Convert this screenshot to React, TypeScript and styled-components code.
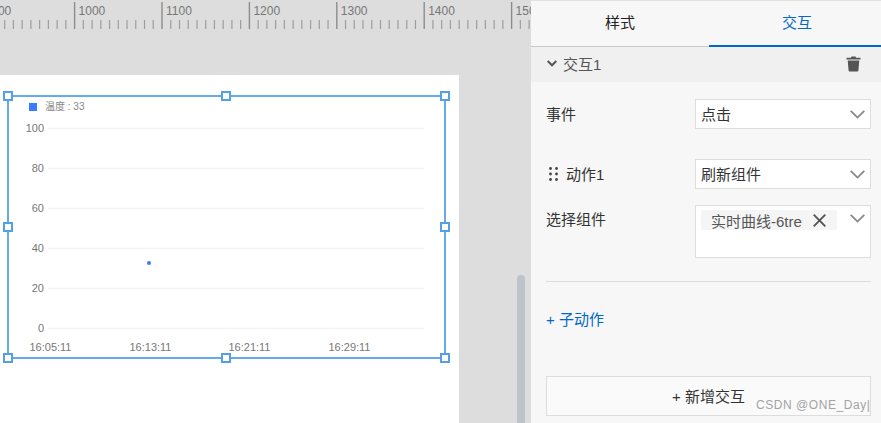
import React from "react";
import styled, { createGlobalStyle } from "styled-components";

const Global = createGlobalStyle`
  html, body { margin: 0; padding: 0; width: 881px; height: 423px; overflow: hidden; background: #ddd; }
  * { box-sizing: border-box; }
  body { font-family: "Liberation Sans", "Noto Sans CJK SC", sans-serif; }
`;

const Page = styled.div`
  display: grid;
  grid-template-columns: 531px 350px;
  width: 881px;
  height: 423px;
  overflow: hidden;
`;

const Workspace = styled.div`
  position: relative;
  background: #dddddd;
  overflow: hidden;
  padding-top: 1px;
`;

const RulerSvg = styled.svg`
  display: block;
  width: 531px;
  height: 29px;
`;

const Artboard = styled.div`
  margin-top: 45px;
  width: 459px;
  height: 348px;
  background: #fff;
  padding: 20px 0 0 7px;
`;

const Selection = styled.div`
  position: relative;
  width: 439px;
  height: 264px;
  border: 2px solid #63abe9;
`;

const HandleLayer = styled.div`
  position: absolute;
  inset: -1px;
`;

const Handle = styled.span<{ $x: number; $y: number }>`
  position: absolute;
  left: ${(p) => p.$x}%;
  top: ${(p) => p.$y}%;
  width: 10px;
  height: 10px;
  margin: -5px 0 0 -5px;
  background: #fff;
  border: 2px solid #559fe4;
`;

const ChartSvg = styled.svg`
  position: absolute;
  left: -2px;
  top: -1px;
  width: 439px;
  height: 263px;
  font-family: "Liberation Sans", "Noto Sans CJK SC", sans-serif;
`;

const Scrollbar = styled.div`
  position: absolute;
  left: 517px;
  top: 275px;
  width: 8px;
  height: 160px;
  border-radius: 4px;
  background: #bcc3cb;
`;

const Panel = styled.aside`
  position: relative;
  background: #f7f7f7;
  border-top: 1px solid #e2e2e2;
  color: #333;
  font-size: 15px;
  display: flex;
  flex-direction: column;
`;

const Tabs = styled.div`
  display: grid;
  grid-template-columns: 178px 172px;
  height: 46px;
  border-bottom: 1px solid #c8c8c8;
`;

const Tab = styled.div<{ $active?: boolean }>`
  display: flex;
  align-items: center;
  justify-content: center;
  height: 46px;
  padding-left: ${(p) => (p.$active ? 4 : 0)}px;
  padding-bottom: 4px;
  color: ${(p) => (p.$active ? "#0068c8" : "#222")};
  border-bottom: 2px solid ${(p) => (p.$active ? "#0068c8" : "transparent")};
`;

const SectionHead = styled.div`
  display: flex;
  align-items: center;
  height: 35px;
  padding: 0 20px 2px 16px;
  background: #f0f0f0;
  color: #555;
  gap: 6px;
`;

const SectionTitle = styled.span`
  flex: 1;
`;

const Body = styled.div`
  display: flex;
  flex-direction: column;
  padding: 17px 10px 0 15px;
`;

const Row = styled.div<{ $mt?: number; $top?: boolean }>`
  display: flex;
  align-items: ${(p) => (p.$top ? "flex-start" : "center")};
  justify-content: space-between;
  margin-top: ${(p) => p.$mt ?? 0}px;
`;

const Label = styled.div<{ $top?: boolean }>`
  display: flex;
  align-items: center;
  gap: 8px;
  color: #333;
  padding-top: ${(p) => (p.$top ? 3 : 0)}px;
  padding-bottom: ${(p) => (p.$top ? 0 : 2)}px;
`;

const GripBox = styled.span`
  display: flex;
  margin-left: 3px;
  padding-top: 2px;
`;

const Field = styled.div<{ $h: number }>`
  position: relative;
  width: 176px;
  height: ${(p) => p.$h}px;
  background: #fff;
  border: 1px solid #ddd;
  display: flex;
  align-items: ${(p) => (p.$h > 40 ? "flex-start" : "center")};
  padding: ${(p) => (p.$h > 40 ? "4px 0 0 5px" : "0 0 2px 5px")};
`;

const Caret = styled.span<{ $top?: boolean }>`
  position: absolute;
  right: 5px;
  top: ${(p) => (p.$top ? "8px" : "10px")};
  display: flex;
`;

const TagChip = styled.span`
  display: inline-flex;
  align-items: center;
  width: 136px;
  height: 20px;
  padding-left: 10px;
  gap: 11px;
  background: #f5f5f5;
  color: #555;
  white-space: nowrap;
`;

const Divider = styled.div`
  height: 1px;
  background: #ddd;
  margin-top: 23px;
`;

const SubAction = styled.div`
  margin-top: 29px;
  line-height: 18px;
  color: #0068c8;
`;

const AddButton = styled.div`
  margin-top: 47px;
  height: 40px;
  width: 325px;
  display: flex;
  align-items: center;
  justify-content: center;
  padding: 0 0 2px 0;
  background: #fafafa;
  border: 1px solid #ddd;
  color: #333;
`;

const Watermark = styled.div`
  position: absolute;
  left: 225px;
  top: 396px;
  font-size: 12px;
  line-height: 16px;
  letter-spacing: 0.55px;
  color: #a3a3a3;
  white-space: nowrap;
`;

const Ruler = () => {
  const start = 74.6 - 87.4;
  const ticks: React.ReactElement[] = [];
  for (let i = 0; i < 70; i++) {
    const x = start + i * 8.74;
    if (x > 531) break;
    const major = i % 10 === 0;
    ticks.push(
      <line
        key={i}
        x1={x}
        x2={x}
        y1={major ? 1 : 19}
        y2={28}
        stroke={major ? "#8c8c8c" : "#9d9d9d"}
        strokeWidth={major ? 1.4 : 1.2}
      />
    );
  }
  const labels = [900, 1000, 1100, 1200, 1300, 1400, 1500];
  return (
    <RulerSvg viewBox="0 0 531 29">
      {ticks}
      {labels.map((l, i) => (
        <text key={l} x={start + i * 87.4 + 4} y={14} fontSize={12} fill="#777" fontFamily="Liberation Sans, sans-serif">
          {l}
        </text>
      ))}
    </RulerSvg>
  );
};

const Chart = () => {
  const yVals = [100, 80, 60, 40, 20, 0];
  const xVals: [string, number][] = [["16:05:11", 43.5], ["16:13:11", 143.5], ["16:21:11", 242.5], ["16:29:11", 342.5]];
  return (
    <ChartSvg viewBox="0 0 439 263">
      <rect x={22} y={7} width={8} height={8} fill="#3b7cff" />
      <text x={38} y={14} fontSize={10} fill="#888">温度 : 33</text>
      {yVals.map((v, i) => {
        const y = 32.5 + i * 40;
        return (
          <g key={v}>
            <line x1={41} x2={417} y1={y} y2={y} stroke="#f4f4f4" strokeWidth={1.6} />
            <text x={37} y={y + 3} fontSize={11} fill="#777" textAnchor="end">{v}</text>
          </g>
        );
      })}
      {xVals.map(([t, x]) => (
        <text key={t} x={x} y={255} fontSize={11} fill="#777" textAnchor="middle">{t}</text>
      ))}
      <circle cx={142} cy={167} r={2} fill="#3b7cff" />
    </ChartSvg>
  );
};

const Trash = () => (
  <svg width="15" height="16" viewBox="0 0 15 16" fill="#555">
    <path d="M5.5 0.5h4l.6 1.3H14.5v1.7H0.5V1.8h4.4z" />
    <path d="M1.7 4.6h11.6l-.9 10a1 1 0 0 1-1 .9H3.6a1 1 0 0 1-1-.9z" />
  </svg>
);

const Grip = () => (
  <svg width="9" height="14" viewBox="0 0 9 14" fill="#444">
    {[1.5, 7, 12.5].map((y) => (
      <g key={y}>
        <circle cx="1.5" cy={y} r="1.4" />
        <circle cx="7.5" cy={y} r="1.4" />
      </g>
    ))}
  </svg>
);

const SelectArrow = () => (
  <svg width="15" height="9" viewBox="0 0 15 9" fill="none" stroke="#888" strokeWidth="1.8">
    <path d="M0.7 0.8 L7.5 7.6 L14.3 0.8" />
  </svg>
);

const FoldArrow = () => (
  <svg width="10" height="7" viewBox="0 0 10 7" fill="none" stroke="#555" strokeWidth="2">
    <path d="M0.7 1 L5 5.3 L9.3 1" />
  </svg>
);

const CloseMark = () => (
  <svg width="13" height="13" viewBox="0 0 13 13" fill="none" stroke="#555" strokeWidth="1.9">
    <path d="M0.7 0.7 L12.3 12.3 M12.3 0.7 L0.7 12.3" />
  </svg>
);

const handles: [number, number][] = [
  [0, 0], [49.8, 0], [100, 0], [0, 50], [100, 50], [0, 100], [49.8, 100], [100, 100],
];

export default function App() {
  return (
    <Page>
      <Global />
      <Workspace>
        <Ruler />
        <Artboard>
          <Selection>
            <Chart />
            <HandleLayer>
              {handles.map(([x, y]) => (
                <Handle key={`${x}-${y}`} $x={x} $y={y} />
              ))}
            </HandleLayer>
          </Selection>
        </Artboard>
        <Scrollbar />
      </Workspace>
      <Panel>
        <Tabs>
          <Tab>样式</Tab>
          <Tab $active>交互</Tab>
        </Tabs>
        <SectionHead>
          <FoldArrow />
          <SectionTitle>交互1</SectionTitle>
          <Trash />
        </SectionHead>
        <Body>
          <Row>
            <Label>事件</Label>
            <Field $h={30}>
              点击
              <Caret><SelectArrow /></Caret>
            </Field>
          </Row>
          <Row $mt={30}>
            <Label><GripBox><Grip /></GripBox>动作1</Label>
            <Field $h={30}>
              刷新组件
              <Caret><SelectArrow /></Caret>
            </Field>
          </Row>
          <Row $mt={16} $top>
            <Label $top>选择组件</Label>
            <Field $h={53}>
              <TagChip>
                实时曲线-6tre
                <CloseMark />
              </TagChip>
              <Caret $top><SelectArrow /></Caret>
            </Field>
          </Row>
          <Divider />
          <SubAction>+ 子动作</SubAction>
          <AddButton>+ 新增交互</AddButton>
        </Body>
        <Watermark>CSDN @ONE_Day|</Watermark>
      </Panel>
    </Page>
  );
}
